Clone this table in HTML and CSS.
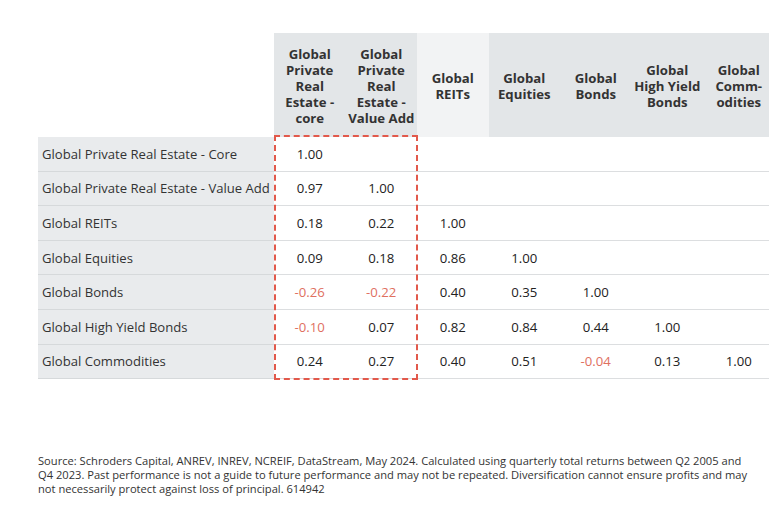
FILE: index.html
```html
<!DOCTYPE html>
<html>
<head>
<meta charset="utf-8">
<link rel="stylesheet" href="styles.css">
</head>
<body>
<div class="page">
  <div class="matrix">
    <div class="corner"></div>
    <div class="hd">Global<br>Private<br>Real<br>Estate -<br>core</div>
    <div class="hd">Global<br>Private<br>Real<br>Estate -<br>Value Add</div>
    <div class="hd hd-light">Global<br>REITs</div>
    <div class="hd">Global<br>Equities</div>
    <div class="hd">Global<br>Bonds</div>
    <div class="hd">Global<br>High Yield<br>Bonds</div>
    <div class="hd">Global<br>Comm-<br>odities</div>

    <div class="lbl">Global Private Real Estate - Core</div>
    <div class="val">1.00</div><div class="val"></div><div class="val"></div><div class="val"></div><div class="val"></div><div class="val"></div><div class="val"></div>

    <div class="lbl">Global Private Real Estate - Value Add</div>
    <div class="val">0.97</div><div class="val">1.00</div><div class="val"></div><div class="val"></div><div class="val"></div><div class="val"></div><div class="val"></div>

    <div class="lbl">Global REITs</div>
    <div class="val">0.18</div><div class="val">0.22</div><div class="val">1.00</div><div class="val"></div><div class="val"></div><div class="val"></div><div class="val"></div>

    <div class="lbl">Global Equities</div>
    <div class="val">0.09</div><div class="val">0.18</div><div class="val">0.86</div><div class="val">1.00</div><div class="val"></div><div class="val"></div><div class="val"></div>

    <div class="lbl">Global Bonds</div>
    <div class="val neg">-0.26</div><div class="val neg">-0.22</div><div class="val">0.40</div><div class="val">0.35</div><div class="val">1.00</div><div class="val"></div><div class="val"></div>

    <div class="lbl">Global High Yield Bonds</div>
    <div class="val neg">-0.10</div><div class="val">0.07</div><div class="val">0.82</div><div class="val">0.84</div><div class="val">0.44</div><div class="val">1.00</div><div class="val"></div>

    <div class="lbl">Global Commodities</div>
    <div class="val">0.24</div><div class="val">0.27</div><div class="val">0.40</div><div class="val">0.51</div><div class="val neg">-0.04</div><div class="val">0.13</div><div class="val">1.00</div>

    <div class="highlight"></div>
  </div>

  <p class="note">Source: Schroders Capital, ANREV, INREV, NCREIF, DataStream, May 2024. Calculated using quarterly total returns between Q2 2005 and Q4 2023. Past performance is not a guide to future performance and may not be repeated. Diversification cannot ensure profits and may not necessarily protect against loss of principal. 614942</p>
</div>
</body>
</html>
```

FILE: styles.css
```css
html, body {
  margin: 0;
  padding: 0;
  background: #ffffff;
  overflow: hidden;
}

body {
  font-family: "Open Sans", "Noto Sans", sans-serif;
  color: #333333;
}

.page {
  padding: 33px 0 0 38px;
  width: 760px;
}

.matrix {
  position: relative;
  display: grid;
  grid-template-columns: 236px repeat(7, 71.5px);
  grid-auto-rows: 34.6px;
  grid-template-rows: 104px;
  width: 736.5px;
}

.corner {
  background: #ffffff;
}

.hd {
  background: #e3e6e8;
  font-weight: 700;
  font-size: 13.2px;
  line-height: 16px;
  color: #333333;
  display: flex;
  align-items: center;
  justify-content: center;
  text-align: center;
  padding-top: 1px;
  box-sizing: border-box;
}

.hd-light {
  background: #f2f3f4;
}

.lbl {
  background: #e9ebed;
  font-size: 13.1px;
  display: flex;
  align-items: center;
  padding-left: 4px;
  white-space: nowrap;
  border-bottom: 1px solid #d6d9db;
  box-sizing: border-box;
}

.val {
  font-size: 13.2px;
  display: flex;
  align-items: center;
  justify-content: center;
  border-bottom: 1px solid #dcdee0;
  box-sizing: border-box;
  color: #222222;
}

.neg {
  color: #e0705f;
}

.highlight {
  position: absolute;
  left: 236px;
  top: 102px;
  width: 144px;
  height: 245px;
  border: 2px dashed #e2594b;
  box-sizing: border-box;
  pointer-events: none;
}

.note {
  margin: 75px 0 0 0;
  width: 716px;
  font-size: 11.15px;
  line-height: 14px;
  color: #333333;
}
```
